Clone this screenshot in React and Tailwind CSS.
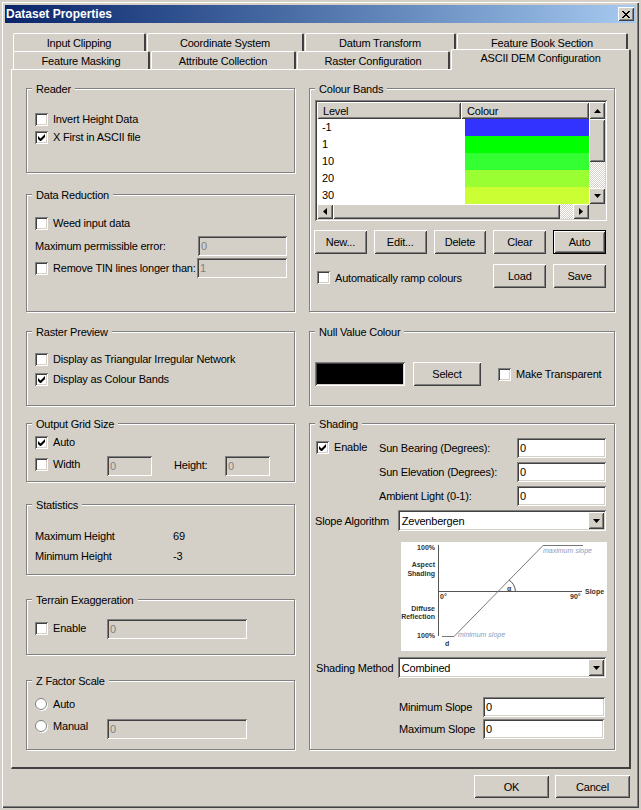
import React from "react";

const FONT = "font-['Liberation_Sans',Arial,sans-serif]";
const FACE = "bg-[#d4d0c8]";
const RAISED =
  "shadow-[inset_1px_1px_0_#fff,inset_-1px_-1px_0_#404040,inset_2px_2px_0_#d4d0c8,inset_-2px_-2px_0_#808080]";
const SUNKEN =
  "shadow-[inset_1px_1px_0_#808080,inset_-1px_-1px_0_#fff,inset_2px_2px_0_#404040,inset_-2px_-2px_0_#d4d0c8]";
const DITHER = "bg-[repeating-conic-gradient(#d4d0c8_0_25%,#fff_0_50%)] bg-[length:2px_2px]";

const bands = [
  { level: "-1", color: "bg-[#3333ff]" },
  { level: "1", color: "bg-[#00ff00]" },
  { level: "10", color: "bg-[#33ff33]" },
  { level: "20", color: "bg-[#99ff33]" },
  { level: "30", color: "bg-[#ccff33]" },
];

const Group = ({ title, className = "", children }) => (
  <div
    className={`border border-[#808080] shadow-[1px_1px_0_#fff,inset_1px_1px_0_#fff] px-2 ${className}`}
  >
    <div className={`-mt-[7px] -ml-[3px] w-fit ${FACE} px-1 h-[13px] leading-[14px]`}>
      {title}
    </div>
    {children}
  </div>
);

const Check = ({ checked, label, className = "" }) => (
  <div className={`flex items-center h-[18px] ${className}`}>
    <div className={`w-[13px] h-[13px] bg-white ${SUNKEN} flex items-center justify-center shrink-0`}>
      {checked && (
        <svg width="7" height="7" viewBox="0 0 7 7">
          <path d="M0 2v3l2 2h1l4-4V0L2.500 4.500z" fill="#000" />
        </svg>
      )}
    </div>
    {label && <span className="ml-[5px] whitespace-nowrap">{label}</span>}
  </div>
);

const Radio = ({ checked, label }) => (
  <div className="flex items-center h-[22px]">
    <div className="w-[12px] h-[12px] rounded-full bg-white border border-[#808080] shadow-[1px_1px_0_#fff] flex items-center justify-center">
      {checked && <div className="w-[4px] h-[4px] rounded-full bg-black" />}
    </div>
    <span className="ml-[6px]">{label}</span>
  </div>
);

const Input = ({ value, disabled, className = "" }) => (
  <div
    className={`${SUNKEN} ${disabled ? "text-[#808080]" : "bg-white text-black"} h-[20px] leading-[20px] pl-[3px] shrink-0 ${className}`}
  >
    {value}
  </div>
);

const Btn = ({ label, def, className = "" }) => (
  <div
    className={`${def ? "border border-black" : ""} ${RAISED} ${className} flex items-center justify-center`}
  >
    {label}
  </div>
);

const Arrow = ({ dir = "down" }) => {
  const points = {
    down: "0,0 7,0 3.500,4",
    up: "0,4 7,4 3.500,0",
    left: "4,0 4,7 0,3.500",
    right: "0,0 0,7 4,3.500",
  };
  const horiz = dir === "left" || dir === "right";
  return (
    <svg width={horiz ? 4 : 7} height={horiz ? 7 : 4} viewBox={horiz ? "0 0 4 7" : "0 0 7 4"}>
      <polygon points={points[dir]} fill="#000" />
    </svg>
  );
};

const ScrollBtn = ({ dir, className = "h-[16px]" }) => (
  <div className={`w-[16px] ${RAISED} ${FACE} flex items-center justify-center shrink-0 ${className}`}>
    <Arrow dir={dir} />
  </div>
);

const Tab = ({ label, className = "" }) => (
  <div
    className={`h-[18px] leading-[19px] text-center rounded-t-[2px] border-t border-l border-white border-r-2 border-r-[#404040] ${className}`}
  >
    {label}
  </div>
);

const Combo = ({ value, className = "" }) => (
  <div className={`${SUNKEN} bg-white h-[21px] flex items-center justify-between pl-[4px] pr-[2px] ${className}`}>
    <span>{value}</span>
    <ScrollBtn dir="down" className="h-[17px]" />
  </div>
);

const Chart = () => (
  <svg width="206" height="109" viewBox="0 0 206 109" className="block bg-white tracking-normal">
    <g stroke="#555" strokeWidth="1" fill="none">
      <path d="M37.500 3v91" />
      <path d="M37.500 49.500H181" />
      <path d="M41 94.500h12L142 3.500h40" stroke="#777" />
      <path d="M108 38q6 4 6.500 11.500" />
    </g>
    <g fontSize="7" fontWeight="700" fill="#333" textAnchor="end">
      <text x="34" y="8">100%</text>
      <text x="34" y="25">Aspect</text>
      <text x="34" y="33.500">Shading</text>
      <text x="34" y="68.500">Diffuse</text>
      <text x="34" y="77">Reflection</text>
      <text x="34" y="96">100%</text>
    </g>
    <g fontSize="7" fontWeight="700" fill="#333">
      <text x="39" y="57">0°</text>
      <text x="169" y="57">90°</text>
      <text x="184" y="52">Slope</text>
      <text x="44" y="104">d</text>
      <text x="106" y="48.500">α</text>
    </g>
    <g fontSize="7" fontStyle="italic" fill="#8a9cc0">
      <text x="142" y="11">maximum slope</text>
      <text x="57" y="95">minimum slope</text>
    </g>
  </svg>
);

const App = () => (
  <div className={`w-[641px] h-[810px] ${FACE} ${FONT} text-[11px] leading-[14px] tracking-[-0.2px] text-black p-[2px] overflow-hidden whitespace-nowrap`}>
    <div className="h-[806px] w-[637px] p-[3px] shadow-[inset_1px_1px_0_#fff,inset_-1px_-1px_0_#404040,inset_-2px_-2px_0_#808080]">
      <div className="h-[18px] bg-gradient-to-r from-[#0a246a] to-[#a6caf0] flex items-center justify-between pl-[1px] pr-[2px]">
        <span className="text-white font-bold text-[12px] tracking-normal">Dataset Properties</span>
        <div className={`w-[16px] h-[14px] ${RAISED} ${FACE} flex items-center justify-center`}>
          <svg width="8" height="7" viewBox="0 0 8 7">
            <path d="M0 0l7 7M1 0l7 7M7 0L0 7M8 0L1 7" stroke="#000" strokeWidth="1" />
          </svg>
        </div>
      </div>

      <div className="pl-[6px] pr-[5px] pt-[10px]">
        <div className="flex gap-[1px] pl-[2px]">
          <Tab label="Input Clipping" className="w-[133px]" />
          <Tab label="Coordinate System" className="w-[157px]" />
          <Tab label="Datum Transform" className="w-[151px]" />
          <Tab label="Feature Book Section" className="w-[171px]" />
        </div>
        <div className="flex gap-[1px] pl-[2px]">
          <Tab label="Feature Masking" className="w-[137px]" />
          <Tab label="Attribute Collection" className="w-[145px]" />
          <Tab label="Raster Configuration" className="w-[153px] border-r-0" />
          <div className={`relative z-10 -mt-[2px] -mb-[1px] w-[180px] h-[21px] pt-[1px] text-center ${FACE} border-t border-l border-white border-r-2 border-r-[#404040] rounded-t-[2px]`}>
            ASCII DEM Configuration
          </div>
        </div>

        {/* tab page */}
        <div className="w-[620px] h-[700px] border-t border-l border-white border-r-2 border-r-[#404040] border-b-2 border-b-[#404040] pt-[18px] pl-[14px] flex gap-[14px]">
          <div className="w-[269px] flex flex-col">
            <Group title="Reader" className="h-[85px]">
              <Check label="Invert Height Data" className="mt-[15px]" />
              <Check checked label="X First in ASCII file" />
            </Group>

            <Group title="Data Reduction" className="h-[118px] mt-[21px]">
              <Check label="Weed input data" className="mt-[13px]" />
              <div className="flex items-center justify-between h-[22px] mt-[3px] -mr-[1px]">
                <span>Maximum permissible error:</span>
                <Input value="0" disabled className="w-[89px]" />
              </div>
              <div className="flex items-center justify-between h-[22px] -mr-[1px]">
                <Check label="Remove TIN lines longer than:" />
                <Input value="1" disabled className="w-[90px]" />
              </div>
            </Group>

            <Group title="Raster Preview" className="h-[75px] mt-[19px]">
              <Check label="Display as Triangular Irregular Network" className="mt-[12px]" />
              <Check checked label="Display as Colour Bands" className="mt-[2px]" />
            </Group>

            <Group title="Output Grid Size" className="h-[59px] mt-[17px]">
              <Check checked label="Auto" className="mt-[3px]" />
              <div className="flex items-start mt-[5px]">
                <Check label="Width" className="w-[72px] -mt-[1px]" />
                <Input value="0" disabled className="w-[45px]" />
                <span className="ml-[22px] w-[51px] leading-[19px]">Height:</span>
                <Input value="0" disabled className="w-[45px]" />
              </div>
            </Group>

            <Group title="Statistics" className="h-[71px] mt-[22px]">
              <div className="flex mt-[15px] h-[20px] items-center">
                <span className="w-[138px]">Maximum Height</span>
                <span>69</span>
              </div>
              <div className="flex h-[20px] items-center">
                <span className="w-[138px]">Minimum Height</span>
                <span>-3</span>
              </div>
            </Group>

            <Group title="Terrain Exaggeration" className="h-[56px] mt-[24px]">
              <div className="flex items-start mt-[13px]">
                <Check label="Enable" className="w-[72px]" />
                <Input value="0" disabled className="w-[140px]" />
              </div>
            </Group>

            <Group title="Z Factor Scale" className="h-[70px] mt-[25px]">
              <div className="mt-[6px]">
                <Radio label="Auto" />
              </div>
              <div className="flex items-start">
                <div className="w-[72px]">
                  <Radio label="Manual" />
                </div>
                <Input value="0" disabled className="w-[140px] mt-[4px]" />
              </div>
            </Group>
          </div>

          <div className="w-[306px] flex flex-col">
            <Group title="Colour Bands" className="h-[224px]">
              <div className={`${SUNKEN} w-[292px] h-[121px] mt-[5px] -ml-[3px] p-[2px]`}>
                <div className="flex h-[17px]">
                  <div className={`w-[144px] ${RAISED} pl-[6px] flex items-center`}>Level</div>
                  <div className={`flex-1 ${RAISED} pl-[6px] flex items-center`}>Colour</div>
                  <ScrollBtn dir="up" className="h-[17px]" />
                </div>
                <div className="flex h-[85px]">
                  <div className="flex-1 bg-white">
                    {bands.map((b) => (
                      <div key={b.level} className="flex h-[17px]">
                        <div className="w-[148px] pl-[5px] leading-[17px]">{b.level}</div>
                        <div className={`flex-1 ${b.color}`} />
                      </div>
                    ))}
                  </div>
                  <div className={`w-[16px] flex flex-col ${DITHER}`}>
                    <div className={`h-[43px] ${RAISED} ${FACE}`} />
                    <div className="flex-1" />
                    <ScrollBtn dir="down" />
                  </div>
                </div>
                <div className="flex h-[15px] pr-[16px]">
                  <ScrollBtn dir="left" className="h-[15px]" />
                  <div className={`flex-1 ${RAISED} ${FACE}`} />
                  <div className={`w-[13px] ${DITHER}`} />
                  <ScrollBtn dir="right" className="h-[15px]" />
                </div>
              </div>
              <div className="flex gap-[7px] mt-[9px] -ml-[4px]">
                <Btn label="New..." className="w-[53px] h-[24px]" />
                <Btn label="Edit..." className="w-[53px] h-[24px]" />
                <Btn label="Delete" className="w-[53px] h-[24px]" />
                <Btn label="Clear" className="w-[53px] h-[24px]" />
                <Btn label="Auto" def className="w-[53px] h-[24px]" />
              </div>
              <div className="flex items-center mt-[10px] -ml-[1px] gap-[7px]">
                <Check label="Automatically ramp colours" className="w-[170px] mt-[3px]" />
                <Btn label="Load" className="w-[53px] h-[24px]" />
                <Btn label="Save" className="w-[53px] h-[24px]" />
              </div>
            </Group>

            <Group title="Null Value Colour" className="h-[75px] mt-[19px]">
              <div className="flex items-center mt-[24px] -ml-[3px]">
                <div className={`w-[90px] h-[24px] bg-black ${SUNKEN}`} />
                <Btn label="Select" className="w-[68px] h-[24px] ml-[8px]" />
                <Check label="Make Transparent" className="ml-[17px]" />
              </div>
            </Group>

            <Group title="Shading" className="h-[327px] mt-[17px]">
              <div className="flex mt-[8px] -ml-[2px]">
                <Check checked label="Enable" className="w-[63px]" />
                <div className="flex flex-col gap-[4px]">
                  {[
                    ["Sun Bearing (Degrees):", "0"],
                    ["Sun Elevation (Degrees):", "0"],
                    ["Ambient Light (0-1):", "0"],
                  ].map(([label, value]) => (
                    <div key={label} className="flex items-center h-[20px]">
                      <span className="w-[138px]">{label}</span>
                      <Input value={value} className="w-[89px]" />
                    </div>
                  ))}
                </div>
              </div>
              <div className="flex items-center mt-[4px] -ml-[3px]">
                <span className="w-[83px]">Slope Algorithm</span>
                <Combo value="Zevenbergen" className="w-[209px]" />
              </div>
              <div className="mt-[11px] ml-[83px]">
                <Chart />
              </div>
              <div className="flex items-center mt-[6px] -ml-[2px]">
                <span className="w-[82px]">Shading Method</span>
                <Combo value="Combined" className="w-[209px]" />
              </div>
              <div className="flex items-center h-[20px] mt-[19px] ml-[81px]">
                <span className="w-[84px]">Minimum Slope</span>
                <Input value="0" className="w-[122px]" />
              </div>
              <div className="flex items-center h-[20px] mt-[2px] ml-[81px]">
                <span className="w-[84px]">Maximum Slope</span>
                <Input value="0" className="w-[121px]" />
              </div>
            </Group>
          </div>
        </div>

        <div className="flex justify-end gap-[6px] mt-[6px] pr-[1px]">
          <Btn label="OK" className="w-[75px] h-[23px]" />
          <Btn label="Cancel" className="w-[75px] h-[23px]" />
        </div>
      </div>
    </div>
  </div>
);

export default App;
